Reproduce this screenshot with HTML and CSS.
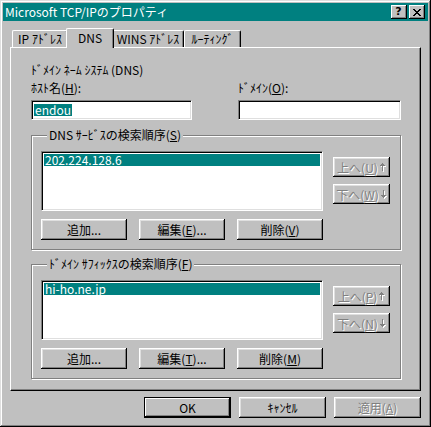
FILE: index.html
```html
<!DOCTYPE html>
<html lang="ja">
<head>
  <meta charset="UTF-8">
  <title>Microsoft TCP/IPのプロパティ</title>
  <link rel="stylesheet" href="styles.css">
</head>
<body>
  <div class="window">
    <div class="titlebar">
      <span class="title">Microsoft TCP/IPのプロパティ</span>
      <div class="caption-btns">
        <span class="cap-btn cap-help">?</span>
        <span class="cap-btn">
          <svg width="8" height="7" viewBox="0 0 8 7" shape-rendering="crispEdges">
            <path d="M0 0h2v1h-2zM6 0h2v1h-2zM1 1h2v1h-2zM5 1h2v1h-2zM2 2h4v1h-4zM3 3h2v1h-2zM2 4h4v1h-4zM1 5h2v1h-2zM5 5h2v1h-2zM0 6h2v1h-2zM6 6h2v1h-2z" fill="#000"/>
          </svg>
        </span>
      </div>
    </div>

    <div class="body">
      <div class="tabs">
        <div class="tab tab-ip">IP ｱﾄﾞﾚｽ</div>
        <div class="tab tab-dns active">DNS</div>
        <div class="tab tab-wins">WINS ｱﾄﾞﾚｽ</div>
        <div class="tab tab-route">ﾙｰﾃｨﾝｸﾞ</div>
      </div>

      <div class="panel">
        <div class="section-title">ﾄﾞﾒｲﾝ ﾈｰﾑ ｼｽﾃﾑ (DNS)</div>
        <div class="fields">
          <div class="field-col field-host">
            <div class="field-label">ﾎｽﾄ名(<u>H</u>):</div>
            <div class="edit"><span class="sel">endou</span></div>
          </div>
          <div class="field-col field-domain">
            <div class="field-label">ﾄﾞﾒｲﾝ(<u>O</u>):</div>
            <div class="edit"></div>
          </div>
        </div>

        <fieldset class="group group-dns">
          <legend>DNS ｻｰﾋﾞｽの検索順序(<u>S</u>)</legend>
          <div class="group-body">
            <div class="list-col">
              <div class="listbox">
                <div class="item selected">202.224.128.6</div>
              </div>
              <div class="btn-row">
                <button class="btn">追加...</button>
                <button class="btn">編集(<u>E</u>)...</button>
                <button class="btn">削除(<u>V</u>)</button>
              </div>
            </div>
            <div class="side-btns">
              <button class="btn btn-side disabled">上へ(<u>U</u>)<svg class="arrow" width="6" height="9" viewBox="0 0 6 9" shape-rendering="crispEdges"><path d="M3 1h1v1h1v1h1v1h-2v5h-1v-5h-2v-1h1v-1h1z" fill="#fff"/><path d="M2 0h1v1h1v1h1v1h-2v5h-1v-5h-2v-1h1v-1h1z" fill="#808080"/></svg></button>
              <button class="btn btn-side disabled">下へ(<u>W</u>)<svg class="arrow" width="6" height="9" viewBox="0 0 6 9" shape-rendering="crispEdges"><path d="M2 1h1v5h2v1h-1v1h-1v1h-1v-1h-1v-1h-1v-1h2z" fill="#fff" transform="translate(1 0)"/><path d="M2 0h1v5h2v1h-1v1h-1v1h-1v-1h-1v-1h-1v-1h2z" fill="#808080"/></svg></button>
            </div>
          </div>
        </fieldset>

        <fieldset class="group group-suffix">
          <legend>ﾄﾞﾒｲﾝ ｻﾌｨｯｸｽの検索順序(<u>F</u>)</legend>
          <div class="group-body">
            <div class="list-col">
              <div class="listbox">
                <div class="item selected">hi-ho.ne.jp</div>
              </div>
              <div class="btn-row">
                <button class="btn">追加...</button>
                <button class="btn">編集(<u>T</u>)...</button>
                <button class="btn">削除(<u>M</u>)</button>
              </div>
            </div>
            <div class="side-btns">
              <button class="btn btn-side disabled">上へ(<u>P</u>)<svg class="arrow" width="6" height="9" viewBox="0 0 6 9" shape-rendering="crispEdges"><path d="M3 1h1v1h1v1h1v1h-2v5h-1v-5h-2v-1h1v-1h1z" fill="#fff"/><path d="M2 0h1v1h1v1h1v1h-2v5h-1v-5h-2v-1h1v-1h1z" fill="#808080"/></svg></button>
              <button class="btn btn-side disabled">下へ(<u>N</u>)<svg class="arrow" width="6" height="9" viewBox="0 0 6 9" shape-rendering="crispEdges"><path d="M2 1h1v5h2v1h-1v1h-1v1h-1v-1h-1v-1h-1v-1h2z" fill="#fff" transform="translate(1 0)"/><path d="M2 0h1v5h2v1h-1v1h-1v1h-1v-1h-1v-1h-1v-1h2z" fill="#808080"/></svg></button>
            </div>
          </div>
        </fieldset>
      </div>

      <div class="footer">
        <button class="btn btn-footer btn-default">OK</button>
        <button class="btn btn-footer">ｷｬﾝｾﾙ</button>
        <button class="btn btn-footer disabled">適用(<u>A</u>)</button>
      </div>
    </div>
  </div>
</body>
</html>
```

FILE: styles.css
```css
*{
  margin: 0;
  padding: 0;
  box-sizing: border-box;
  font-family: "Noto Sans CJK JP", "Liberation Sans", sans-serif;
  font-size: 12px;
  color: #000;
}

body{
  width: 431px;
  height: 427px;
  overflow: hidden;
  background-color: #c0c0c0;
}

.window{
  width: 431px;
  height: 427px;
  padding: 3px;
  background-color: #c0c0c0;
  box-shadow: inset -1px -1px 0 #000, inset 1px 1px 0 #dfdfdf, inset -2px -2px 0 #808080, inset 2px 2px 0 #fff;
}

/* title bar */
.titlebar{
  display: flex;
  align-items: center;
  justify-content: space-between;
  height: 18px;
  padding: 0 3px 0 2px;
  background-color: #008080;
}

.title{
  color: #fff;
  line-height: 18px;
}

.caption-btns{
  display: flex;
  gap: 2px;
}

.cap-btn{
  display: flex;
  align-items: center;
  justify-content: center;
  width: 16px;
  height: 14px;
  background-color: #c0c0c0;
  box-shadow: inset -1px -1px 0 #000, inset 1px 1px 0 #fff, inset -2px -2px 0 #808080;
}

.cap-help{
  font-family: "DejaVu Sans", sans-serif;
  font-weight: bold;
  font-size: 11px;
  line-height: 14px;
  padding: 0 1px 1px 0;
}

/* tabs */
.body{
  padding: 7px 7px 0;
}

.tabs{
  display: flex;
  align-items: flex-end;
  height: 19px;
  padding-left: 2px;
}

.tab{
  height: 17px;
  line-height: 15px;
  text-align: center;
  background-color: #c0c0c0;
  border-top: 1px solid #fff;
  border-left: 1px solid #fff;
  border-right: 1px solid #000;
  border-radius: 2px 2px 0 0;
  box-shadow: inset -1px 0 0 #808080;
}

.tab-ip{ width: 56px; }
.tab-dns{ width: 44px; }
.tab-wins{ width: 72px; }
.tab-route{ width: 57px; }

.tab.active{
  position: relative;
  z-index: 1;
  width: 48px;
  height: 20px;
  line-height: 17px;
  margin: 0 -2px -1px;
}

.panel{
  height: 344px;
  padding: 14px 19px 0 20px;
  border: 1px solid;
  border-color: #fff #000 #000 #fff;
  box-shadow: inset -1px -1px 0 #808080;
}

.section-title{
  line-height: 16px;
}

.fields{
  display: flex;
  justify-content: space-between;
}

.field-host{ width: 161px; }
.field-domain{ width: 163px; }

.field-label{
  margin-top: 2px;
  line-height: 16px;
}

.edit{
  height: 20px;
  margin-top: 4px;
  padding: 3px 2px 0;
  background-color: #fff;
  border: 1px solid;
  border-color: #808080 #fff #fff #808080;
  box-shadow: inset 1px 1px 0 #000, inset -1px -1px 0 #dfdfdf;
  line-height: 12px;
}

.sel{
  display: inline-block;
  padding: 0 1px;
  height: 12px;
  line-height: 12px;
  background-color: #008080;
  color: #fff;
}

/* group boxes */
.group{
  min-width: 0;
  margin-top: 7px;
  padding: 0 10px 9px 9px;
  border: 1px solid #808080;
  box-shadow: inset 1px 1px 0 #fff, 1px 1px 0 #fff;
}

.group-suffix{
  margin-top: 6px;
}

.group legend{
  margin-left: 6px;
  padding: 0 2px;
  line-height: 16px;
  background-color: #c0c0c0;
}

.group-body{
  display: flex;
  justify-content: space-between;
  padding-top: 8px;
}

.list-col{
  width: 282px;
}

.listbox{
  height: 60px;
  padding: 2px 2px;
  background-color: #fff;
  border: 1px solid;
  border-color: #808080 #fff #fff #808080;
  box-shadow: inset 1px 1px 0 #000, inset -1px -1px 0 #dfdfdf;
}

.item{
  height: 12px;
  line-height: 12px;
  padding-left: 1px;
}

.item.selected{
  background-color: #008080;
  color: #fff;
}

.btn-row{
  display: flex;
  gap: 12px;
  margin-top: 8px;
}

/* buttons */
.btn{
  display: flex;
  align-items: center;
  justify-content: center;
  width: 86px;
  height: 21px;
  border: 0;
  background-color: #c0c0c0;
  box-shadow: inset -1px -1px 0 #000, inset 1px 1px 0 #fff, inset -2px -2px 0 #808080, inset 2px 2px 0 #dfdfdf;
  line-height: 14px;
  padding-top: 1px;
}

.btn u{
  color: inherit;
}

.btn.disabled,
.btn.disabled u{
  color: #808080;
  text-shadow: 1px 1px 0 #fff;
}

.side-btns{
  display: flex;
  flex-direction: column;
  gap: 7px;
  padding-top: 6px;
}

.btn-side{
  width: 57px;
  height: 20px;
}

.arrow{
  margin-left: 2px;
}

.footer{
  display: flex;
  justify-content: flex-end;
  gap: 8px;
  margin-top: 6px;
}

.btn-footer{
  width: 87px;
}

.btn-default{
  box-shadow: inset 0 0 0 1px #000, inset -2px -2px 0 #000, inset 2px 2px 0 #fff, inset -3px -3px 0 #808080;
}
```
